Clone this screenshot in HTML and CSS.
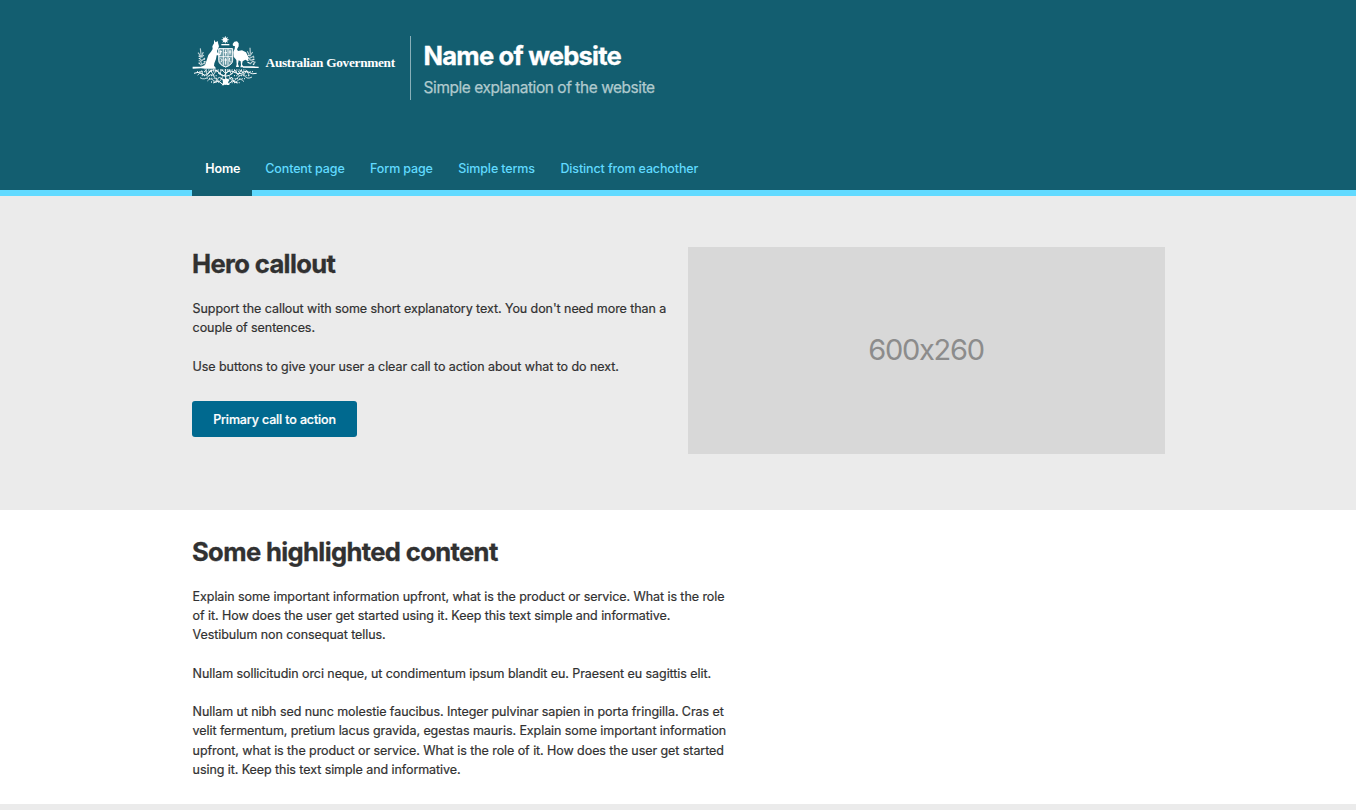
FILE: index.html
```html
<!DOCTYPE html>
<html lang="en">
<head>
<meta charset="utf-8">
<title>Name of website</title>
<link rel="stylesheet" href="styles.css">
</head>
<body>
<header class="header">
  <div class="container header-main">
    <div class="brand">
      <svg class="crest" viewBox="18 18 201 150" fill="#fff" stroke="none">
        <path d="M118 17l2 7 6-3-3 6 7 2-7 3 3 6-6-3-2 6-3-6-6 3 3-6-7-3 7-2-3-6 6 3z"/>
        <path d="M106 42h24v4h-24z"/>
        <path d="M84 29l5 8 6-4 2 9 2 7-3 7-3 7 2 6 8 3-1 4-10 0-2 11-5 13-1 7 5 6v3H57l-12-1-25 1v-3l24-2 13-6 5-14 5-16 8-10 5-8-1-8 5-9z"/>
        <path d="M140 42l5-7 8-1 5 6v9l-5 9 3 5 12-2 12 6 7 13-1 14-8-5-8 5-2 9 5 9h-10l2-7-1-11-6-3-2 11 3 9h-9l2-8-1-13-8-10-1-14 4-10 1-7-6-2z"/>
        <path d="M171 109h30l17 1v4l-47-1zM20 110h40v4H20z"/>
        <g fill="none" stroke="#fff" stroke-width="2">
          <path d="M99 56h40v35q0 13-20 20-20-7-20-20z" fill="#fff" fill-opacity=".35"/>
          <path d="M98 56h42v35q0 13-21 20-21-7-21-20zM99 80h40M112 56v50M126 56v50" opacity=".85" stroke-width="3"/>
          <path d="M104 61v13M108 65h-7M119 59v18M115 68h8M132 60v14M128 66h8M104 85l5 5-5 7M119 84v20M115 90h8M131 84l-2 8 5 4" stroke-width="3"/>
          <path d="M36 68l10 12-8-2M43 55l2 18M52 66l-7 15 9-5M40 84l7 8 10-8M43 92l5 12 12-10M38 98l8 8M200 66l-9 13M192 53l1 18M184 64l7 14M204 78l-13 7M187 84l8 7 10-5M184 96l9 5 9-9M208 95l-7 10" stroke-width="3.5" opacity=".7"/>
          <path d="M24 130q12-7 25 2t23-7q12-12 28 3t18 4q10-14 25-6t24 4q9-10 21-3t24 3" stroke-width="3"/>
          <path d="M35 136l12-14 4 15M57 118l6 15 11-12 8 14 10-15 9 12 7-15M128 118l8 14 11-12 9 15 9-15 9 14 8-13 8 16M42 143q14 9 25-4t22 7 21-7M64 153q9-11 18-2t16-9M198 141q-14 8-22-3t-23 7-23-6M174 155q-11-13-20-2t-17-12" stroke-width="3" opacity=".8"/>
          <path d="M97 130q22 17 43 0M100 142q19 15 38 0M82 159l15-6 12 9M155 159l-16-6-12 9M108 120l11 10 12-10M119 117v48" stroke-width="3"/>
        </g>
        <path d="M109 145l8 5 5-5 8 6-4 6 5 8h-8l-5-3-4 4h-7l4-8z"/>
        <g fill="none" stroke="#fff" stroke-width="4" stroke-dasharray="3 4" opacity=".8">
          <path d="M33 125h62M47 137h46M62 145h34M75 156h27M142 125h62M144 137h48M139 146h42M137 158h25M40 77v27M55 86v20M188 75v27M203 80v25M60 120h120"/>
        </g>
      </svg>
      <span class="gov">Australian Government</span>
    </div>
    <div class="titles">
      <h1 class="site-title">Name of website</h1>
      <p class="subtitle">Simple explanation of the website</p>
    </div>
  </div>
  <nav class="nav">
    <div class="container nav-list">
      <a class="nav-item active">Home</a>
      <a class="nav-item">Content page</a>
      <a class="nav-item">Form page</a>
      <a class="nav-item">Simple terms</a>
      <a class="nav-item">Distinct from eachother</a>
    </div>
  </nav>
</header>
<section class="hero">
  <div class="container hero-grid">
    <div class="hero-copy">
      <h2 class="heading">Hero callout</h2>
      <p class="text">Support the callout with some short explanatory text. You don't need more than a<br>couple of sentences.</p>
      <p class="text">Use buttons to give your user a clear call to action about what to do next.</p>
      <a class="button">Primary call to action</a>
    </div>
    <div class="placeholder">600x260</div>
  </div>
</section>
<section class="content">
  <div class="container">
    <h2 class="heading">Some highlighted content</h2>
    <p class="text">Explain some important information upfront, what is the product or service. What is the role<br>of it. How does the user get started using it. Keep this text simple and informative.<br>Vestibulum non consequat tellus.</p>
    <p class="text">Nullam sollicitudin orci neque, ut condimentum ipsum blandit eu. Praesent eu sagittis elit.</p>
    <p class="text">Nullam ut nibh sed nunc molestie faucibus. Integer pulvinar sapien in porta fringilla. Cras et<br>velit fermentum, pretium lacus gravida, egestas mauris. Explain some important information<br>upfront, what is the product or service. What is the role of it. How does the user get started<br>using it. Keep this text simple and informative.</p>
  </div>
</section>
<footer class="footer"></footer>
</body>
</html>
```
FILE: styles.css
```css
* { box-sizing: border-box; }
body {
  margin: 0;
  height: 810px;
  overflow: hidden;
  background: #fff;
  color: #313131;
  font: 12.5px/19.2px Inter, "Liberation Sans", sans-serif;
}
h1, h2, p { margin: 0; }
p { white-space: nowrap; }
.container { width: 973px; margin: 0 0 0 192px; }
.header {
  height: 196px;
  padding-top: 36px;
  background: #135e70;
  display: flex;
  flex-direction: column;
  justify-content: space-between;
}
.header-main { display: flex; height: 64px; }
.brand { display: flex; width: 218px; }
.crest { width: 67px; height: 50px; flex: none; }
.gov {
  margin: 17px 0 0 6.6px;
  color: #fff;
  font: bold 13.3px/20px "Liberation Serif", serif;
  letter-spacing: -0.3px;
  white-space: nowrap;
}
.titles { border-left: 1px solid #89afb8; padding: 4px 0 0 12.6px; }
.site-title {
  color: #fff;
  font-size: 25.6px;
  line-height: 32px;
  letter-spacing: -0.8px;
  -webkit-text-stroke: 0.3px #fff;
}
.subtitle {
  margin-top: 6px;
  color: #b0cace;
  font-size: 15.4px;
  line-height: 20px;
  letter-spacing: -0.41px;
  -webkit-text-stroke: 0.25px #b0cace;
}
.nav { height: 48px; border-bottom: 6px solid #61daff; }
.nav-list { display: flex; }
.nav-item {
  height: 48px;
  padding: 11px 12.2px 0 13.3px;
  color: #61daff;
  font-weight: 500;
  letter-spacing: -0.13px;
  white-space: nowrap;
}
.active { width: 60px; background: #135e70; color: #fff; font-weight: 600; }
.hero { height: 314px; padding-top: 51px; background: #ebebeb; }
.hero-grid { display: flex; justify-content: space-between; }
.heading {
  font-size: 25.6px;
  line-height: 34px;
  letter-spacing: -0.64px;
  -webkit-text-stroke: 0.3px #313131;
}
.text { padding-left: 0.6px; letter-spacing: -0.068px; -webkit-text-stroke: 0.2px #313131; }
.heading + .text { margin-top: 18px; }
.text + .text { margin-top: 19.2px; }
.button {
  display: flex;
  align-items: center;
  justify-content: center;
  width: 165px;
  height: 36px;
  margin-top: 25px;
  padding-top: 1px;
  border-radius: 3px;
  background: #00698f;
  color: #fff;
  font-weight: 500;
  letter-spacing: -0.14px;
  -webkit-text-stroke: 0.2px #fff;
}
.placeholder {
  width: 477px;
  height: 207px;
  padding: 0 1px 1px 0;
  display: flex;
  align-items: center;
  justify-content: center;
  background: #d8d8d8;
  color: #8c8c8c;
  font-size: 29px;
  font-feature-settings: "calt" 0;
  letter-spacing: -1.3px;
}
.content { height: 294px; padding-top: 25px; }
.footer { height: 6px; background: #ebebeb; }
```
